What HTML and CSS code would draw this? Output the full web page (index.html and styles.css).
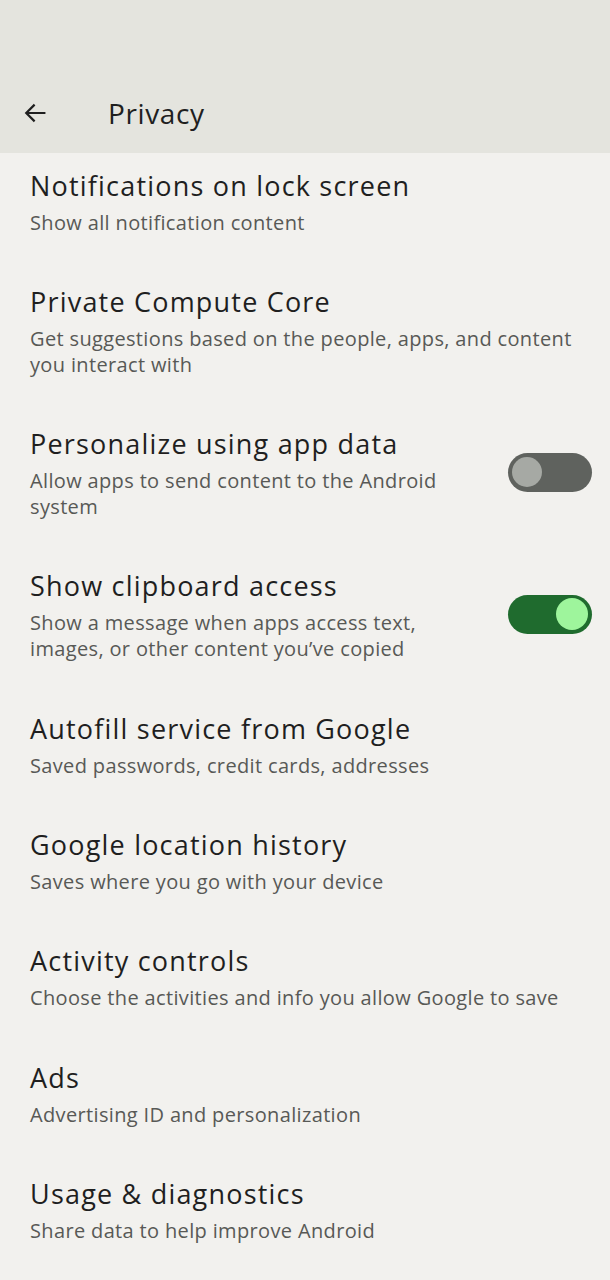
FILE: index.html
```html
<!DOCTYPE html>
<html>
<head>
<meta charset="utf-8">
<link rel="stylesheet" href="styles.css">
</head>
<body>
<div class="page">
  <header class="appbar">
    <span class="back">
      <svg width="28" height="28" viewBox="0 0 24 24"><path d="M20 12H5M11 5.5L4.5 12 11 18.5" fill="none" stroke="#1f1f1f" stroke-width="1.9" stroke-linecap="square"/></svg>
    </span>
    <h1 class="title">Privacy</h1>
  </header>
  <main class="list">
    <div class="row"><div class="text"><div class="t">Notifications on lock screen</div><div class="s">Show all notification content</div></div></div>
    <div class="row"><div class="text"><div class="t">Private Compute Core</div><div class="s">Get suggestions based on the people, apps, and content you interact with</div></div></div>
    <div class="row"><div class="text"><div class="t">Personalize using app data</div><div class="s">Allow apps to send content to the Android system</div></div><div class="switch off"><span class="thumb"></span></div></div>
    <div class="row"><div class="text"><div class="t">Show clipboard access</div><div class="s">Show a message when apps access text, images, or other content you’ve copied</div></div><div class="switch on"><span class="thumb"></span></div></div>
    <div class="row"><div class="text"><div class="t">Autofill service from Google</div><div class="s">Saved passwords, credit cards, addresses</div></div></div>
    <div class="row"><div class="text"><div class="t">Google location history</div><div class="s">Saves where you go with your device</div></div></div>
    <div class="row"><div class="text"><div class="t">Activity controls</div><div class="s">Choose the activities and info you allow Google to save</div></div></div>
    <div class="row"><div class="text"><div class="t">Ads</div><div class="s">Advertising ID and personalization</div></div></div>
    <div class="row"><div class="text"><div class="t">Usage &amp; diagnostics</div><div class="s">Share data to help improve Android</div></div></div>
  </main>
</div>
</body>
</html>
```
FILE: styles.css
```css
html, body { margin: 0; padding: 0; }
body { background: #f2f1ee; font-family: "Open Sans", Roboto, sans-serif; color: #1f1f1f; }
.page { width: 610px; height: 1280px; overflow: hidden; }
.appbar {
  height: 153px;
  background: #e4e4de;
  display: flex;
  align-items: flex-end;
  padding: 0 0 16px 0;
  box-sizing: border-box;
}
.back { width: 28px; height: 28px; margin-left: 21px; margin-bottom: 10px; display: flex; }
.title { margin: 0 0 0 59px; font-size: 28px; font-weight: 400; line-height: 48px; letter-spacing: 0.6px; color: #1f1f1f; }
.list { display: flex; flex-direction: column; }
.row {
  display: flex;
  align-items: center;
  padding: 12.5px 18px 33.8px 30px;
  gap: 20px;
}
.text { flex: 1; min-width: 0; }
.t { font-size: 27px; line-height: 40px; letter-spacing: 1.2px; color: #1f1f1f; margin-bottom: 4px; }
.s { font-size: 20px; line-height: 26px; letter-spacing: 0.35px; color: #585956; }
.switch {
  width: 84px; height: 39px; border-radius: 20px; flex: none;
  display: flex; align-items: center; box-sizing: border-box; padding: 0 4px;
  margin-left: 28px;
}
.switch .thumb { width: 30px; height: 30px; border-radius: 50%; }
.switch.off { background: #5f625e; }
.switch.off .thumb { background: #a6a9a4; }
.switch.on { background: #1f6b2e; justify-content: flex-end; }
.switch.on .thumb { background: #9ef59c; width: 32px; height: 32px; }
```
